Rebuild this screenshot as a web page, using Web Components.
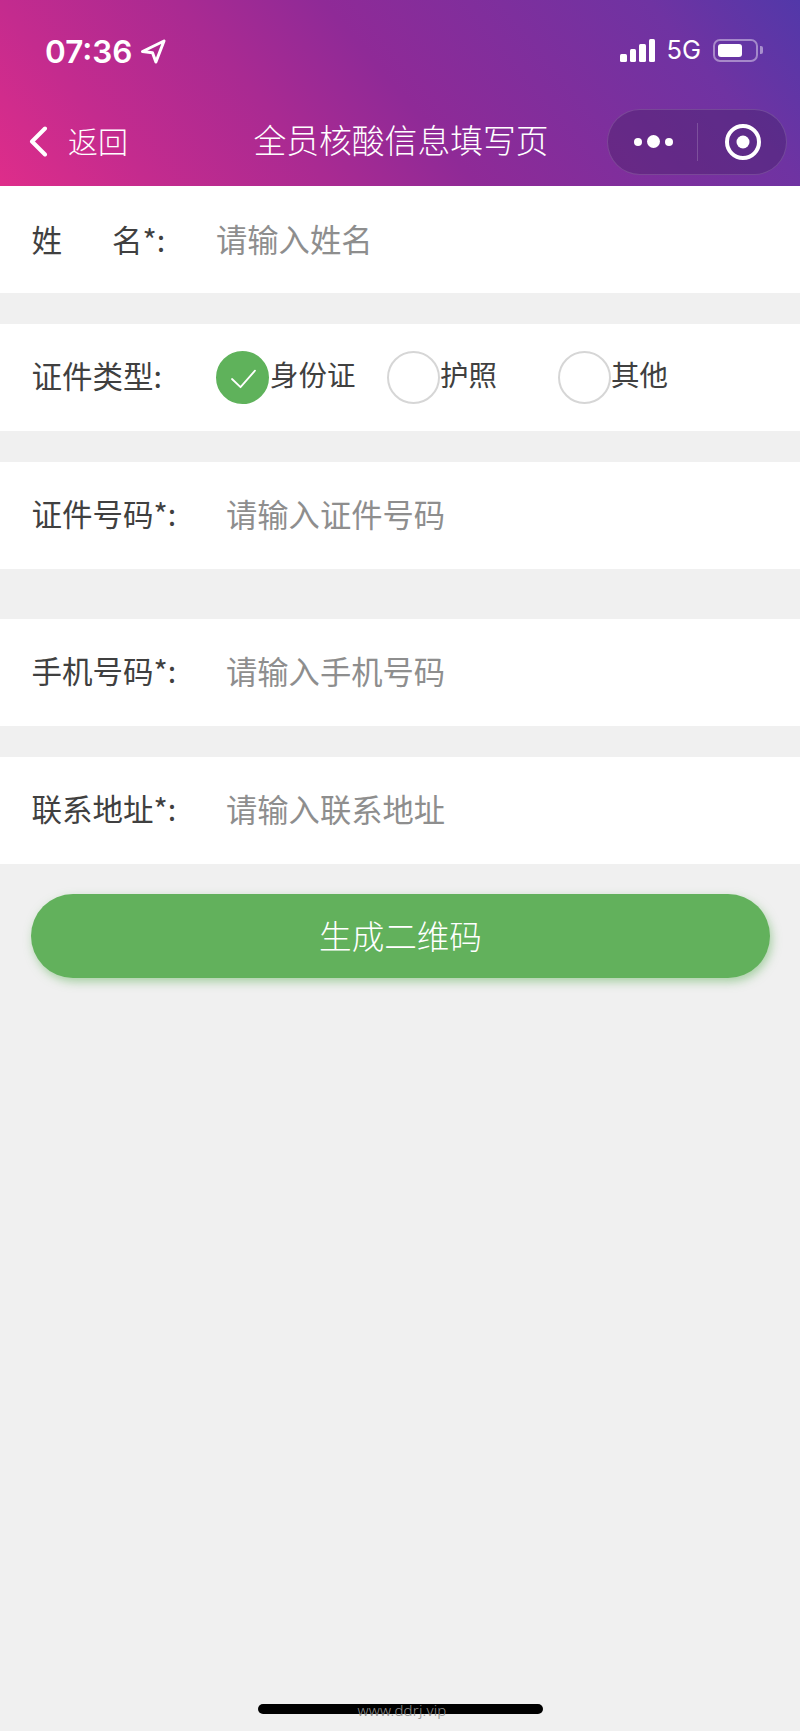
<!DOCTYPE html>
<html lang="zh-CN">
<head>
<meta charset="utf-8">
<title>全员核酸信息填写页</title>
<style>
  html, body { margin: 0; padding: 0; background: #f0f0f0; }
  body { font-family: "Noto Sans CJK SC", "Noto Sans", sans-serif; }
</style>
</head>
<body>
<app-page>
  <app-header slot="header" title-text="全员核酸信息填写页"></app-header>
  <form-row style="margin-bottom:31px;--label-y:0px;--ph-y:-1px" placeholder="请输入姓名" gap="216"><span slot="label" style="display:inline-flex;gap:50px"><span>姓</span><span>名*:</span></span></form-row>
  <form-row style="margin-bottom:31px"><span slot="label">证件类型:</span>
    <radio-group slot="value">
      <radio-option checked>身份证</radio-option>
      <radio-option>护照</radio-option>
      <radio-option>其他</radio-option>
    </radio-group>
  </form-row>
  <form-row style="margin-bottom:50px" placeholder="请输入证件号码"><span slot="label">证件号码*:</span></form-row>
  <form-row style="margin-bottom:31px" placeholder="请输入手机号码"><span slot="label">手机号码*:</span></form-row>
  <form-row style="margin-bottom:30px" placeholder="请输入联系地址"><span slot="label">联系地址*:</span></form-row>
  <primary-button>生成二维码</primary-button>
  <home-indicator slot="footer" mark="www.ddrj.vip"></home-indicator>
</app-page>

<script>
function define(name, css, html) {
  customElements.define(name, class extends HTMLElement {
    constructor() {
      super();
      const r = this.attachShadow({ mode: 'open' });
      r.innerHTML = '<style>' + css + '</style>' + (typeof html === 'function' ? html(this) : html);
    }
  });
}

define('app-page', `
  :host { display:flex; flex-direction:column; height:1731px; background:#f0f0f0; overflow:hidden; }
  main { display:flex; flex-direction:column; flex:1; }
  footer { margin-top:auto; }
`, `<slot name="header"></slot><main><slot></slot></main><footer><slot name="footer"></slot></footer>`);

define('status-bar', `
  :host { display:flex; align-items:center; justify-content:space-between; height:94px; padding:3px 37px 0 45px; color:#fff; box-sizing:content-box; }
  .left,.right { display:flex; align-items:center; }
  .time { font:600 31.5px/1 Inter, "Liberation Sans", sans-serif; position:relative; top:2px; }
  .left svg { margin-left:7px; position:relative; top:1px; }
  .signal { display:flex; align-items:flex-end; gap:3px; height:23px; }
  .signal i { display:block; width:6.5px; background:#fff; border-radius:1.5px; }
  .net { font:400 25.5px/1 Inter, "Liberation Sans", sans-serif; margin:0 12px 0 11px; }
  .bat { display:flex; align-items:center; gap:2px; }
  .shell { width:45px; height:23px; box-sizing:border-box; border:2px solid rgba(255,255,255,.42); border-radius:7px; padding:3px; display:flex; }
  .fill { width:24px; background:#fff; border-radius:3px; }
  .cap { width:3px; height:8px; background:rgba(255,255,255,.45); border-radius:0 2px 2px 0; }
`, `
  <div class="left"><span class="time">07:36</span>
    <svg width="26" height="25" viewBox="0 0 26 25" fill="none"><path d="M24 2 2.5 12.5l10 1.2 3.4 9.3z" stroke="#fff" stroke-width="3" stroke-linejoin="round"/></svg>
  </div>
  <div class="right">
    <div class="signal"><i style="height:8px"></i><i style="height:13px"></i><i style="height:18px"></i><i style="height:23px"></i></div>
    <span class="net">5G</span>
    <div class="bat"><div class="shell"><div class="fill"></div></div><div class="cap"></div></div>
  </div>`);

define('capsule-menu', `
  :host { display:flex; align-items:center; width:180px; height:66px; box-sizing:border-box; border:1px solid rgba(255,255,255,.14); border-radius:33px; background:rgba(58,28,92,.34); }
  .more { flex:1; display:flex; align-items:center; justify-content:center; gap:5px; padding-left:2px; }
  .more i { display:block; border-radius:50%; background:#fff; width:8px; height:8px; }
  .more i.mid { width:13px; height:13px; }
  .line { width:1px; height:38px; background:rgba(255,255,255,.18); }
  .rec { flex:1; display:flex; justify-content:center; align-items:center; padding-left:1px; }
`, `<div class="more"><i></i><i class="mid"></i><i></i></div><div class="line"></div>
  <div class="rec"><svg width="38" height="38" viewBox="0 0 38 38"><circle cx="19" cy="19" r="16" fill="none" stroke="#fff" stroke-width="4"/><circle cx="19" cy="19" r="6.5" fill="#fff"/></svg></div>`);

define('nav-bar', `
  :host { display:grid; grid-template-columns:1fr auto 1fr; align-items:center; height:89px; padding:0 13px 0 29px; color:#fff; }
  .back { display:flex; align-items:center; gap:20px; font-size:30px; line-height:1; font-weight:300; }
  .back span { position:relative; top:-2px; }
  .title { font-size:32.8px; line-height:1; font-weight:300; white-space:nowrap; position:relative; left:-7px; top:-2px; }
  capsule-menu { justify-self:end; }
`, `
  <div class="back"><svg width="19" height="31" viewBox="0 0 19 31" fill="none"><path d="M16 2.5 3 15.5l13 13" stroke="#fff" stroke-width="4" stroke-linecap="round" stroke-linejoin="round"/></svg><span>返回</span></div>
  <div class="title"><slot></slot></div>
  <capsule-menu></capsule-menu>`);

define('app-header', `
  :host { display:block; height:186px; background:linear-gradient(50deg,#de2d8a 0%,#c42b8e 16%,#a92a92 35%,#8f2a97 50%,#6f33a2 84%,#5238a9 100%); }
`, host => `<status-bar></status-bar><nav-bar>${host.getAttribute('title-text') || ''}</nav-bar>`);

define('form-row', `
  :host { display:flex; align-items:center; height:107px; background:#fff; padding-left:31.5px; font-size:30.5px; color:#404040; font-weight:400; flex:none; }
  .label { flex:none; white-space:nowrap; line-height:1; position:relative; top:var(--label-y,-2px); }
  .value { flex:1; display:flex; align-items:center; }
  .ph { color:#8e8e8e; font-size:31.3px; line-height:1; position:relative; top:var(--ph-y,-2px); }
`, host => {
  const ph = host.getAttribute('placeholder');
  const w = host.getAttribute('gap') ? '184.5px' : (ph ? '194.5px' : '184.5px');
  return `<div class="label" style="width:${w}"><slot name="label"></slot></div>
  <div class="value"><slot name="value">${ph ? `<span class="ph">${ph}</span>` : ''}</slot></div>`;
});

define('radio-group', `:host { display:flex; align-items:center; }`, `<slot></slot>`);

define('radio-option', `
  :host { display:flex; align-items:center; width:171px; flex:none; font-size:28.5px; color:#404040; font-weight:400; line-height:1; }
  .dot { width:53px; height:53px; box-sizing:border-box; border-radius:50%; border:2px solid #d6d6d6; background:#fff; flex:none; display:block; }
  :host([checked]) .dot { background:#5fb25b; border-color:#5fb25b; margin-right:1px; }
  .t { position:relative; top:-3px; }
`, host => `<svg class="dot" viewBox="0 0 49 49" fill="none">${host.hasAttribute('checked') ? '<path d="M14 26 22.5 34.2 37 17.6" stroke="#fff" stroke-width="1.8" stroke-linecap="round" stroke-linejoin="round"/>' : ''}</svg><span class="t"><slot></slot></span>`);

define('primary-button', `
  :host { display:flex; align-items:center; justify-content:center; height:84px; margin:0 30px 0 31px; border-radius:42px; background:#62b15c; color:#fff; font-size:32.6px; font-weight:300; line-height:1; box-shadow:2px 4px 10px rgba(96,178,90,.5); flex:none; }
  span { position:relative; top:-1px; }
`, `<span><slot></slot></span>`);

define('home-indicator', `
  :host { display:block; position:relative; height:27px; padding:0 257px 0 258px; }
  .bar { height:10px; background:#000; border-radius:5px; }
  .mark { position:absolute; left:0; right:0; top:-4px; text-align:center; padding-left:4px; color:#8d8d8d; font:300 15px/20px "Noto Sans","Liberation Sans",sans-serif; letter-spacing:.2px; }
`, host => `<div class="bar"></div><div class="mark">${host.getAttribute('mark') || ''}</div>`);
</script>
</body>
</html>
